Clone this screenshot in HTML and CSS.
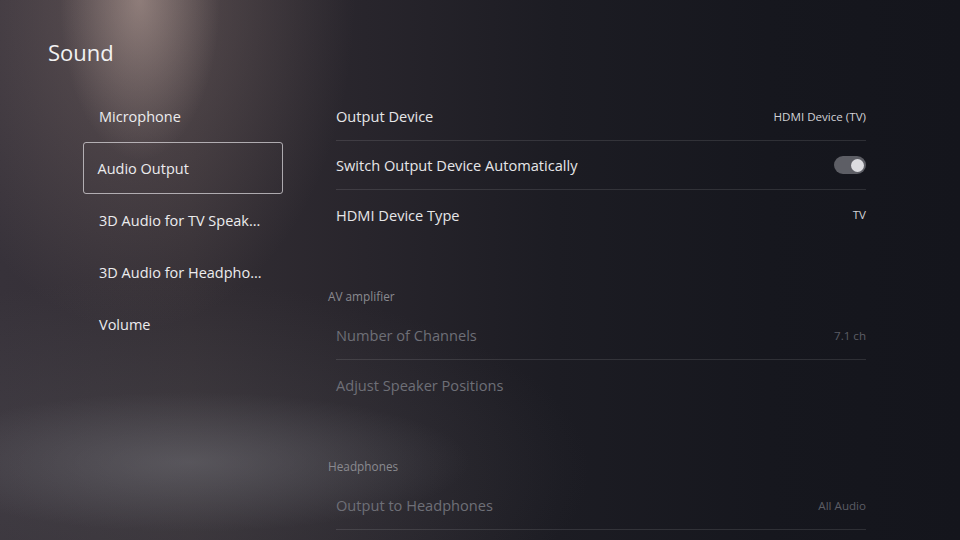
FILE: index.html
```html
<!DOCTYPE html>
<html lang="en">
<head>
<meta charset="utf-8">
<title>Sound</title>
<link rel="stylesheet" href="styles.css">
</head>
<body>
<div class="screen">
  <h1 class="title">Sound</h1>
  <div class="layout">
    <nav class="menu">
      <div class="menu-item">Microphone</div>
      <div class="menu-item selected">Audio Output</div>
      <div class="menu-item">3D Audio for TV Speak...</div>
      <div class="menu-item">3D Audio for Headpho...</div>
      <div class="menu-item">Volume</div>
    </nav>
    <section class="panel">
      <div class="group">
        <div class="row sep"><span class="label">Output Device</span><span class="value">HDMI Device (TV)</span></div>
        <div class="row sep"><span class="label">Switch Output Device Automatically</span><span class="toggle"><span class="knob"></span></span></div>
        <div class="row"><span class="label">HDMI Device Type</span><span class="value">TV</span></div>
      </div>
      <div class="group-head">AV amplifier</div>
      <div class="group dim">
        <div class="row sep"><span class="label">Number of Channels</span><span class="value">7.1 ch</span></div>
        <div class="row"><span class="label">Adjust Speaker Positions</span></div>
      </div>
      <div class="group-head">Headphones</div>
      <div class="group dim">
        <div class="row sep"><span class="label">Output to Headphones</span><span class="value">All Audio</span></div>
      </div>
    </section>
  </div>
</div>
</body>
</html>
```
FILE: styles.css
```css
html, body {
  margin: 0;
  padding: 0;
  width: 960px;
  height: 540px;
  overflow: hidden;
}
body {
  font-family: "Open Sans", "Noto Sans", sans-serif;
  color: #e8e8ea;
  background:
    radial-gradient(ellipse 80px 160px at 140px 0px, rgba(205, 180, 170, 0.45), rgba(205, 180, 170, 0) 100%),
    radial-gradient(ellipse 220px 330px at 135px 0px, rgba(150, 128, 124, 0.40), rgba(150, 128, 124, 0) 100%),
    radial-gradient(ellipse 280px 70px at 190px 462px, rgba(125, 125, 132, 0.40), rgba(125, 125, 132, 0) 100%),
    radial-gradient(ellipse 440px 190px at 150px 470px, rgba(90, 88, 92, 0.35), rgba(90, 88, 92, 0) 100%),
    linear-gradient(90deg, #37323a 0%, #332e34 20%, #28252c 38%, #1c1c23 58%, #16171e 80%, #14151c 100%);
}
.screen {
  padding: 37px 0 0 48px;
}
.title {
  margin: 0;
  font-size: 22px;
  font-weight: 400;
  line-height: 30px;
  color: #f2f2f2;
}
.layout {
  display: flex;
  margin-top: 23px;
}
.menu {
  width: 200px;
  margin-left: 35px;
  display: flex;
  flex-direction: column;
}
.menu-item {
  height: 52px;
  box-sizing: border-box;
  display: flex;
  align-items: center;
  padding-left: 15px;
  font-size: 14.5px;
  color: #ececee;
  border: 1.5px solid transparent;
  border-radius: 3px;
  white-space: nowrap;
}
.menu-item.selected {
  border-color: rgba(220, 218, 222, 0.72);
  padding-left: 13.5px;
}
.panel {
  margin-left: 45px;
  width: 538px;
  padding-top: 2px;
}
.group {
  margin-left: 8px;
  width: 530px;
}
.row {
  height: 49px;
  box-sizing: border-box;
  display: flex;
  align-items: center;
  justify-content: space-between;
  font-size: 14.6px;
  color: #e6e6e8;
}
.row.sep {
  border-bottom: 1px solid rgba(255, 255, 255, 0.11);
}
.value {
  font-size: 11.6px;
  color: #d2d2d6;
}
.dim .row {
  color: #6e6f77;
}
.dim .value {
  color: #5c5d65;
}
.group-head {
  margin-top: 47px;
  margin-bottom: 5px;
  line-height: 20px;
  font-size: 11.8px;
  color: #8a8a90;
}
.toggle {
  width: 32px;
  height: 18px;
  border-radius: 9px;
  background: #5d5e65;
  display: flex;
  align-items: center;
  justify-content: flex-end;
  padding-right: 2px;
  box-sizing: border-box;
}
.knob {
  width: 13px;
  height: 13px;
  border-radius: 50%;
  background: #dcdce0;
}
```
